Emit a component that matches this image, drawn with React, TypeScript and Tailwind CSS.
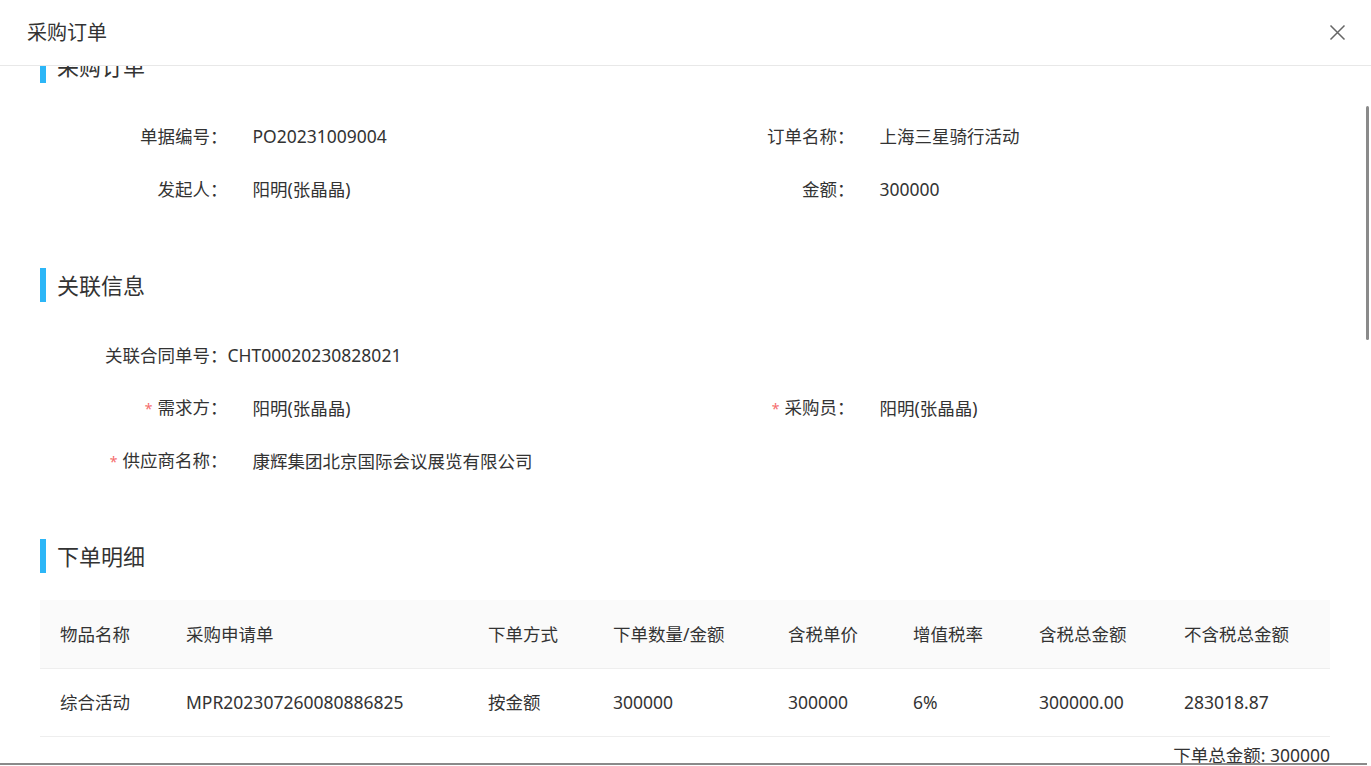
import React, { useLayoutEffect, useRef } from "react";

const FONT = '"Noto Sans", "Noto Sans CJK SC", sans-serif';

function SectionTitle({ children }: { children: React.ReactNode }) {
  return (
    <div className="flex items-center h-[34px]">
      <div className="w-[6px] h-[34px] bg-[#2cb6f7]" />
      <div className="ml-[11px] text-[22px] leading-[34px] text-[#333]">{children}</div>
    </div>
  );
}

function Field({
  label,
  value,
  required,
  tight,
}: {
  label: string;
  value: string;
  required?: boolean;
  tight?: boolean;
}) {
  return (
    <div className="flex items-center h-[53px]">
      <div className="w-[187.5px] shrink-0 text-right whitespace-nowrap text-[#333]">
        {required && <span className="text-[#f56c6c] text-[14px] mr-[5px]">*</span>}
        {label}：
      </div>
      <div className={(tight ? "ml-0" : "ml-[25px]") + " whitespace-nowrap text-[#333]"}>{value}</div>
    </div>
  );
}

const headers = ["物品名称", "采购申请单", "下单方式", "下单数量/金额", "含税单价", "增值税率", "含税总金额", "不含税总金额"];
const row = ["综合活动", "MPR202307260080886825", "按金额", "300000", "300000", "6%", "300000.00", "283018.87"];
const widths = [126, 302, 125, 175, 125, 126, 145, 166];

export default function App() {
  const scrollRef = useRef<HTMLDivElement>(null);
  useLayoutEffect(() => {
    if (scrollRef.current) scrollRef.current.scrollTop = 17;
  }, []);

  return (
    <div className="relative w-full h-[766px] bg-white overflow-hidden flex flex-col" style={{ fontFamily: FONT }}>
      <div className="h-[66px] shrink-0 border-b border-[#e8e8e8] flex items-center justify-between pl-[27px] pr-[25px]">
        <div className="text-[20px] text-[#333] leading-none">采购订单</div>
        <svg width="17" height="17" viewBox="0 0 17 17" className="text-[#666]">
          <path d="M1.5 1.5 L15.5 15.5 M15.5 1.5 L1.5 15.5" stroke="currentColor" strokeWidth="1.5" fill="none" />
        </svg>
      </div>

      <div ref={scrollRef} className="flex-1 overflow-hidden">
        <div className="pl-[40px] pr-[41px] pb-[40px] text-[17.5px] leading-[24px]">
          <SectionTitle>采购订单</SectionTitle>
          <div className="grid grid-cols-[627px_627px] mt-[26.5px] mb-[52.5px]">
            <Field label="单据编号" value="PO20231009004" />
            <Field label="订单名称" value="上海三星骑行活动" />
            <Field label="发起人" value="阳明(张晶晶)" />
            <Field label="金额" value="300000" />
          </div>

          <SectionTitle>关联信息</SectionTitle>
          <div className="grid grid-cols-[627px_627px] mt-[26.5px] mb-[51.5px]">
            <Field label="关联合同单号" value="CHT00020230828021" tight />
            <div />
            <Field label="需求方" value="阳明(张晶晶)" required />
            <Field label="采购员" value="阳明(张晶晶)" required />
            <Field label="供应商名称" value="康辉集团北京国际会议展览有限公司" required />
            <div />
          </div>

          <SectionTitle>下单明细</SectionTitle>
          <table className="mt-[27px] w-[1290px] table-fixed border-collapse">
            <colgroup>
              {widths.map((w, i) => (
                <col key={i} style={{ width: w }} />
              ))}
            </colgroup>
            <thead>
              <tr className="bg-[#fafafa] border-b border-[#eeeeee]">
                {headers.map((h) => (
                  <th key={h} className="h-[68px] px-[20px] text-left font-normal text-[#333] whitespace-nowrap">
                    {h}
                  </th>
                ))}
              </tr>
            </thead>
            <tbody>
              <tr className="border-b border-[#eeeeee]">
                {row.map((c, i) => (
                  <td key={i} className="h-[68px] px-[20px] text-[#333] whitespace-nowrap">
                    {c}
                  </td>
                ))}
              </tr>
            </tbody>
          </table>
          <div className="mt-[6px] text-right text-[#333]">下单总金额: 300000</div>
        </div>
      </div>

      <div className="absolute right-[2px] top-[106px] w-[3px] h-[234px] rounded-full bg-[#8a8a8a]" />
      <div className="absolute left-0 bottom-[1px] w-[1367px] h-[2px] bg-[#8a8a8a]" />
    </div>
  );
}
